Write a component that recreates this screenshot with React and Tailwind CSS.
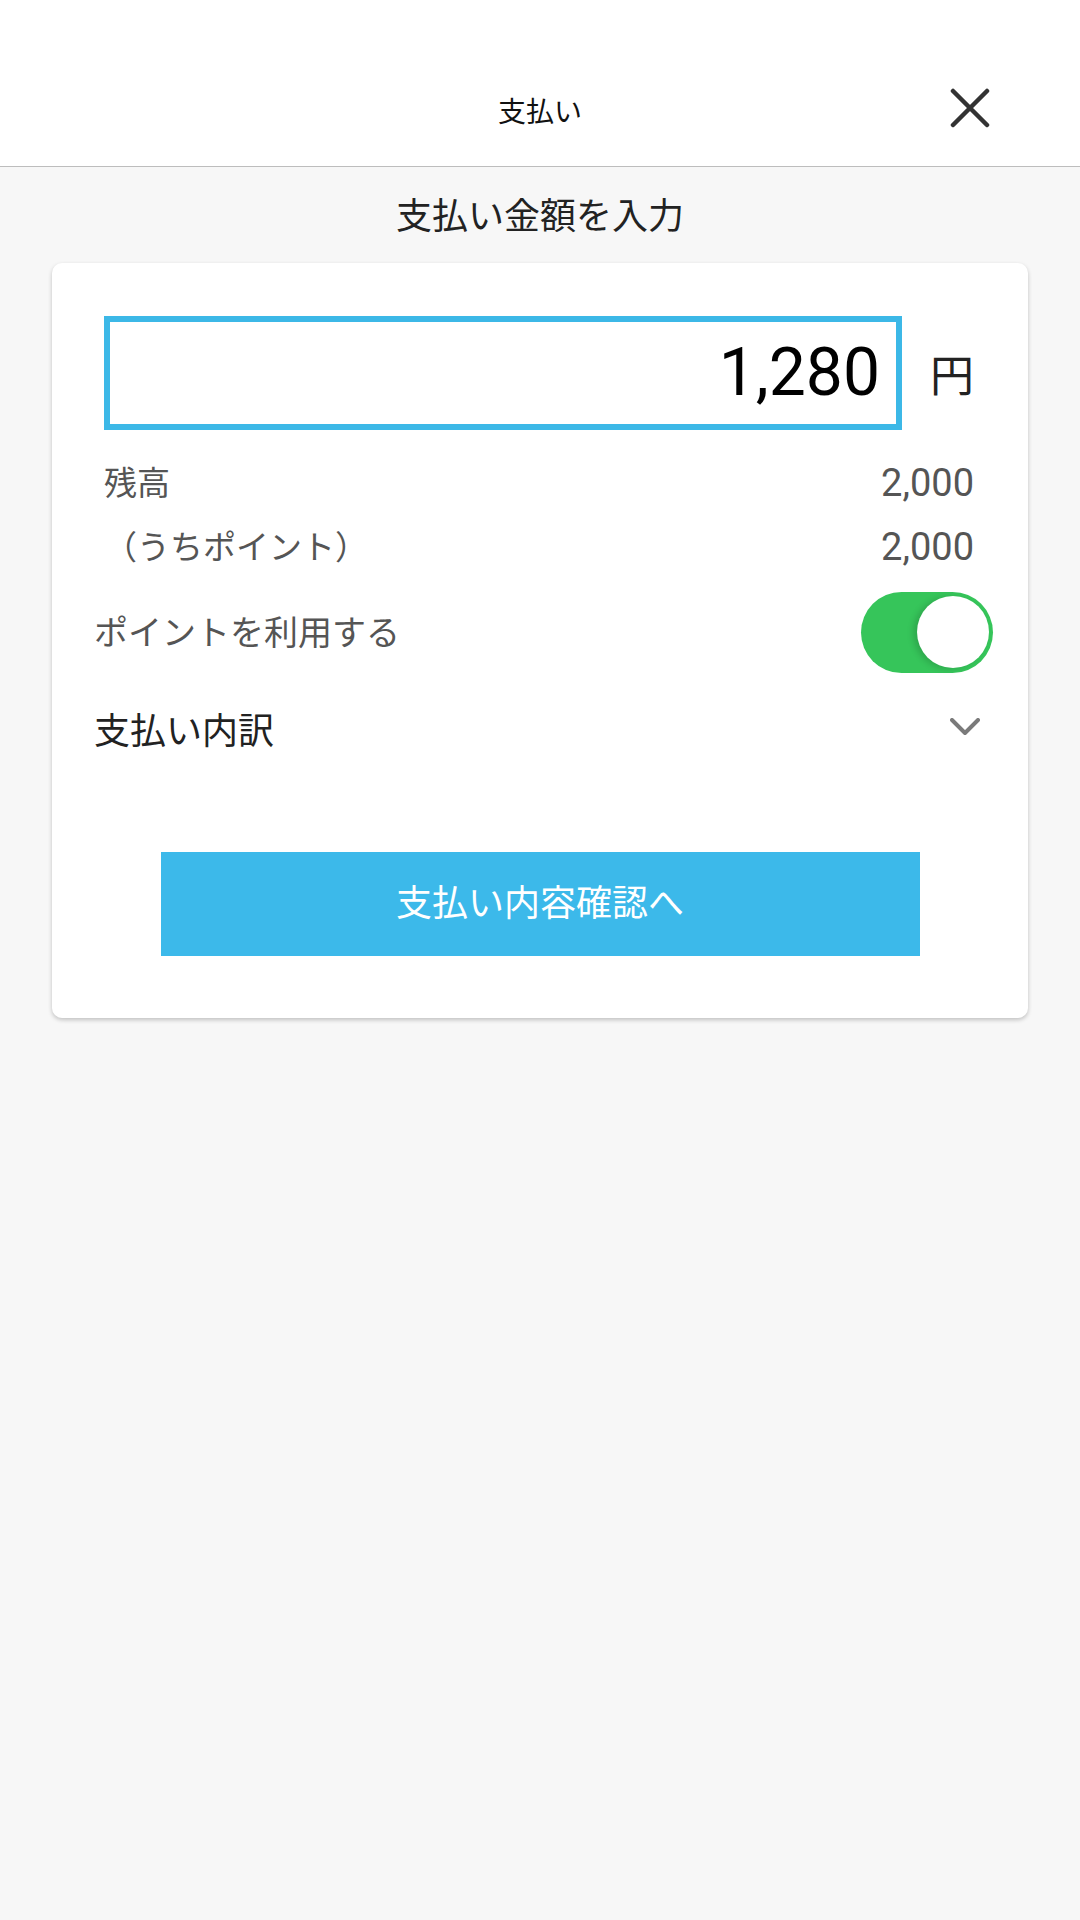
import React from 'react';

const font = { fontFamily: 'Roboto, "Noto Sans CJK JP", sans-serif' };

function CloseIcon() {
  return (
    <svg width="40" height="40" viewBox="0 0 40 40" fill="none">
      <path d="M3 3L37 37M37 3L3 37" stroke="#333" strokeWidth="4.5" strokeLinecap="round" />
    </svg>
  );
}

function Chevron() {
  return (
    <svg width="30" height="18" viewBox="0 0 30 18" fill="none">
      <path d="M2 2L15 15L28 2" stroke="#7a7a7a" strokeWidth="4" strokeLinecap="round" strokeLinejoin="round" />
    </svg>
  );
}

function Toggle() {
  return (
    <div className="relative w-[132px] h-[81px] rounded-full bg-[#36c55a]">
      <div className="absolute right-[4px] top-[4px] w-[72px] h-[72px] rounded-full bg-white shadow-[-4px_1px_6px_rgba(0,0,0,0.15)]" />
    </div>
  );
}

export default function App() {
  return (
    <div className="w-[1080px] min-h-[1920px] bg-[#f7f7f7]" style={font}>
      {/* header */}
      <div className="h-[167px] bg-white border-b border-[#bdbdbd]">
        <div className="pt-[88px] grid grid-cols-[1fr_auto_1fr] items-center">
          <div />
          <span className="text-[28px] leading-none text-[#111] pt-[10px]">支払い</span>
          <div className="flex justify-end pr-[90px]">
            <CloseIcon />
          </div>
        </div>
      </div>

      <div className="h-[96px] flex items-center justify-center pt-[4px]">
        <h1 className="text-[36px] leading-none text-[#222]">支払い金額を入力</h1>
      </div>

      {/* card */}
      <div className="mx-[52px] rounded-[10px] bg-white shadow-[0_2px_4px_rgba(0,0,0,0.22)] pt-[53px] pb-[62px]">
        <div className="flex items-center pl-[52px]">
          <div className="w-[798px] h-[114px] border-[6px] border-[#3cb8e7] flex items-center justify-end pr-[16px]">
            <span className="text-[66px] leading-none text-black">1,280</span>
          </div>
          <span className="ml-[28px] pt-[8px] text-[44px] leading-none text-[#222]">円</span>
        </div>

        <div className="mt-[21px] pl-[52px] pr-[54px] text-[#555]">
          <div className="h-[64px] flex items-center justify-between">
            <span className="text-[33px] leading-none">残高</span>
            <span className="text-[38px] leading-none">2,000</span>
          </div>
          <div className="h-[64px] flex items-center justify-between">
            <span className="text-[33px] leading-none">（うちポイント）</span>
            <span className="text-[38px] leading-none">2,000</span>
          </div>
        </div>

        <div className="mt-[13px] h-[81px] pl-[42px] pr-[35px] flex items-center justify-between">
          <span className="text-[34px] leading-none text-[#555]">ポイントを利用する</span>
          <Toggle />
        </div>

        <div className="mt-[29px] h-[60px] pl-[42px] pr-[48px] flex items-center justify-between">
          <span className="text-[36px] leading-none text-[#222]">支払い内訳</span>
          <div className="pb-[10px]">
            <Chevron />
          </div>
        </div>

        <button className="mt-[90px] mx-auto flex w-[759px] h-[104px] items-center justify-center bg-[#3cb9ea] text-white text-[36px] leading-none">
          支払い内容確認へ
        </button>
      </div>
    </div>
  );
}
